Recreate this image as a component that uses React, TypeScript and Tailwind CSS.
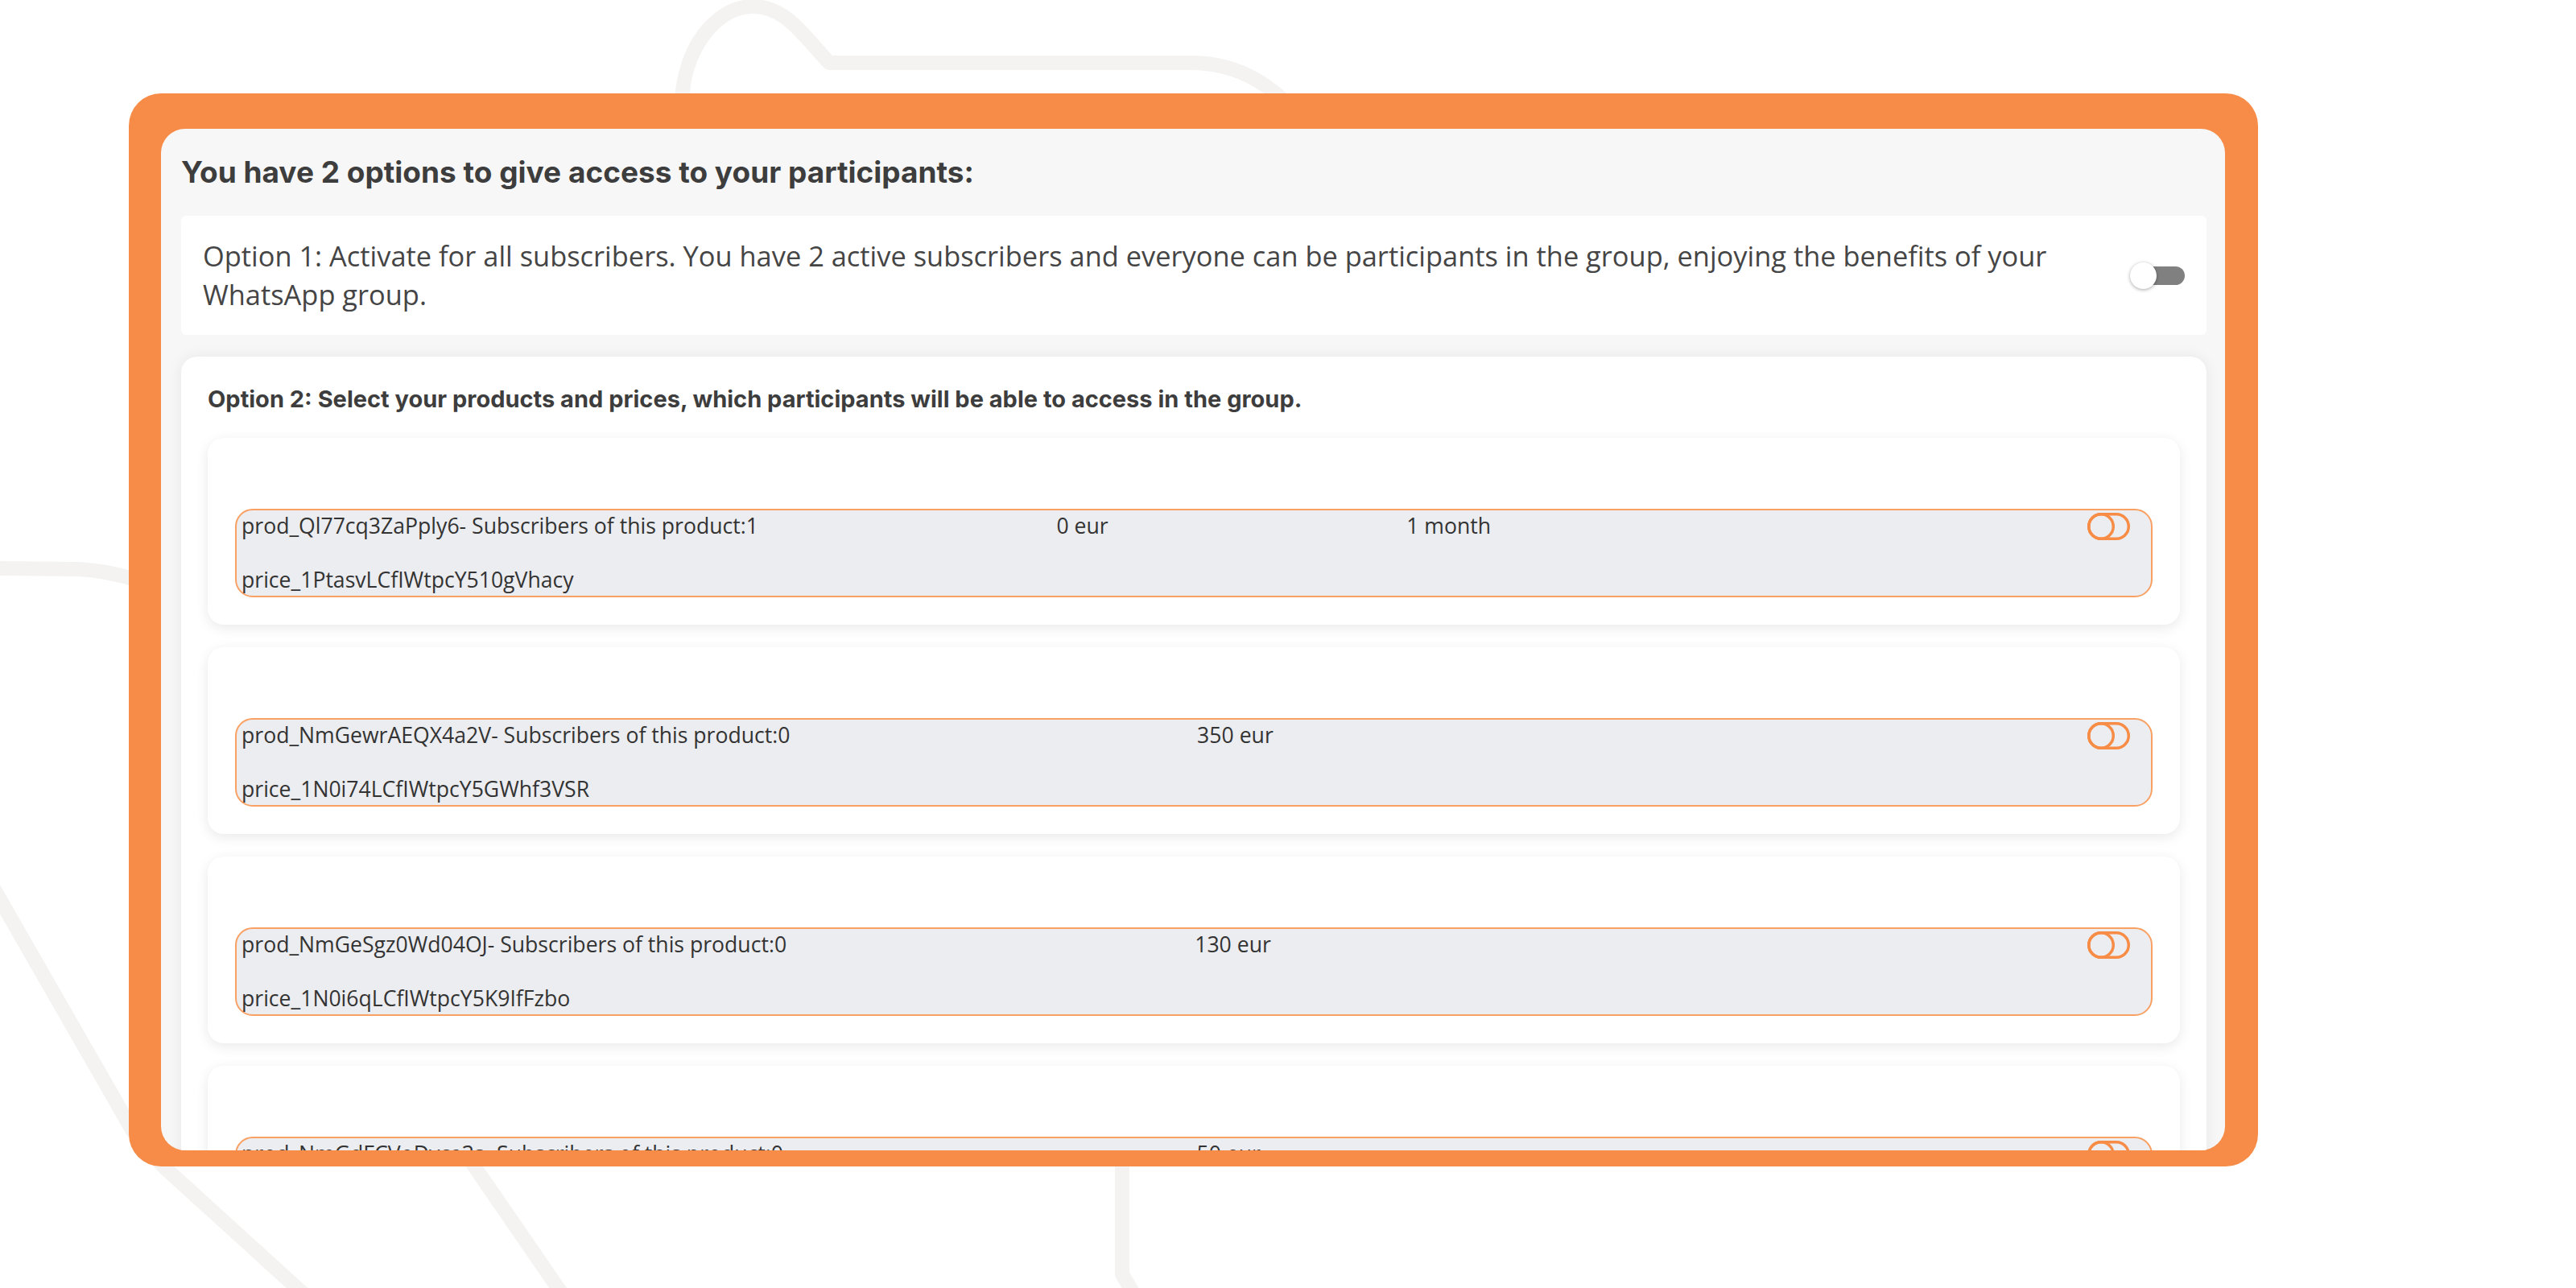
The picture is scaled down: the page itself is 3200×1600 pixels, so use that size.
import { useState } from 'react'

type Product = {
  id: string
  subscribers: number
  price: string
  interval?: string
  priceId: string
}

const products: Product[] = [
  { id: 'prod_Ql77cq3ZaPply6', subscribers: 1, price: '0 eur', interval: '1 month', priceId: 'price_1PtasvLCfIWtpcY510gVhacy' },
  { id: 'prod_NmGewrAEQX4a2V', subscribers: 0, price: '350 eur', priceId: 'price_1N0i74LCfIWtpcY5GWhf3VSR' },
  { id: 'prod_NmGeSgz0Wd04OJ', subscribers: 0, price: '130 eur', priceId: 'price_1N0i6qLCfIWtpcY5K9IfFzbo' },
  { id: 'prod_NmGdFCVoDyca3s', subscribers: 0, price: '50 eur', priceId: 'price_1N0i5xLCfIWtpcY5bQ2mKd7e' },
]

function OutlineToggle() {
  return (
    <svg width="53" height="34" viewBox="0 0 53 34" fill="none" className="shrink-0">
      <rect x="1.75" y="1.75" width="49.5" height="30.5" rx="15.25" stroke="#f78c46" strokeWidth="3.5" />
      <circle cx="17" cy="17" r="15.25" stroke="#f78c46" strokeWidth="3.5" />
    </svg>
  )
}

function Backdrop() {
  return (
    <svg className="absolute inset-0" width="3200" height="1600" viewBox="0 0 3200 1600" fill="none">
      <g stroke="#f4f3f1" strokeWidth="18" strokeLinecap="round" strokeLinejoin="round">
        <path d="M 847 130 C 848 60, 890 8, 935 8 C 975 8, 995 40, 1030 78 L 1480 78 C 1530 78, 1570 100, 1600 130" />
        <path d="M -10 706 L 95 707 C 125 708, 150 714, 175 722" />
        <path d="M -10 1100 L 165 1405 L 204 1450 L 380 1610" />
        <path d="M 560 1400 L 590 1450 L 700 1610" />
        <path d="M 1394 1440 L 1394 1583 L 1410 1610" />
      </g>
    </svg>
  )
}

export default function App() {
  const [allSubscribers, setAllSubscribers] = useState(false)

  return (
    <div className="relative h-[1600px] w-[3200px] overflow-hidden bg-white">
      <Backdrop />
      <div className="relative pl-[160px] pt-[116px]">
        <div className="h-[1333px] w-[2645px] rounded-[40px] bg-[#f68c47] pb-[20px] pl-[40px] pr-[41px] pt-[44px]">
          <div className="h-full overflow-hidden rounded-[30px] bg-[#f7f7f7] pl-[25px] pr-[23px]">
            <h2 className="pt-[32px] text-[37px] font-bold leading-[44px] text-[#3d3d3d] [font-family:Inter,'Liberation_Sans',sans-serif]">
              You have 2 options to give access to your participants:
            </h2>

            <div className="mt-[32px] flex h-[148px] items-center justify-between rounded-[6px] bg-white px-[27px]">
              <p className="w-[2330px] text-[34.4px] leading-[48px] text-[#454545] [font-family:'Open_Sans','Noto_Sans',sans-serif]">
                Option 1: Activate for all subscribers. You have 2 active subscribers and everyone can be participants in the group, enjoying the benefits of your WhatsApp group.
              </p>
              <button
                type="button"
                onClick={() => setAllSubscribers(v => !v)}
                className="relative flex h-[34px] w-[68px] shrink-0 items-center"
                aria-label="Activate for all subscribers"
                aria-pressed={allSubscribers}
              >
                <span className="absolute right-0 h-[23px] w-[52px] rounded-full bg-[#808080]" />
                <span className="absolute left-0 h-[33px] w-[33px] rounded-full bg-white shadow-[0_1px_4px_rgba(0,0,0,0.35)]" />
              </button>
            </div>

            <section className="mt-[27px] rounded-[20px] bg-white px-[33px] pb-[34px] pt-[35px] shadow-[0_0_18px_rgba(0,0,0,0.07)]">
              <h3 className="text-[29px] font-bold leading-[36px] text-[#3d3d3d] [font-family:Inter,'Liberation_Sans',sans-serif]">
                Option 2: Select your products and prices, which participants will be able to access in the group.
              </h3>
              <div className="mt-[30px] flex flex-col gap-[28px]">
                {products.map(product => (
                  <div
                    key={product.id}
                    className="rounded-[20px] bg-white px-[34px] pb-[34px] pt-[88px] shadow-[0_4px_16px_rgba(0,0,0,0.09)]"
                  >
                    <div className="rounded-[22px] border-2 border-[#f9a062] bg-[#ecedf0] pl-[6px] pr-[26px] text-[26.6px] leading-[39px] text-[#333] [font-family:'Open_Sans','Noto_Sans',sans-serif]">
                      <div className="flex items-center justify-between">
                        <span>{product.id}- Subscribers of this product:{product.subscribers}</span>
                        <span>{product.price}</span>
                        {product.interval && <span>{product.interval}</span>}
                        <span />
                        <OutlineToggle />
                      </div>
                      <div className="mt-[28px]">{product.priceId}</div>
                    </div>
                  </div>
                ))}
              </div>
            </section>
          </div>
        </div>
      </div>
    </div>
  )
}
